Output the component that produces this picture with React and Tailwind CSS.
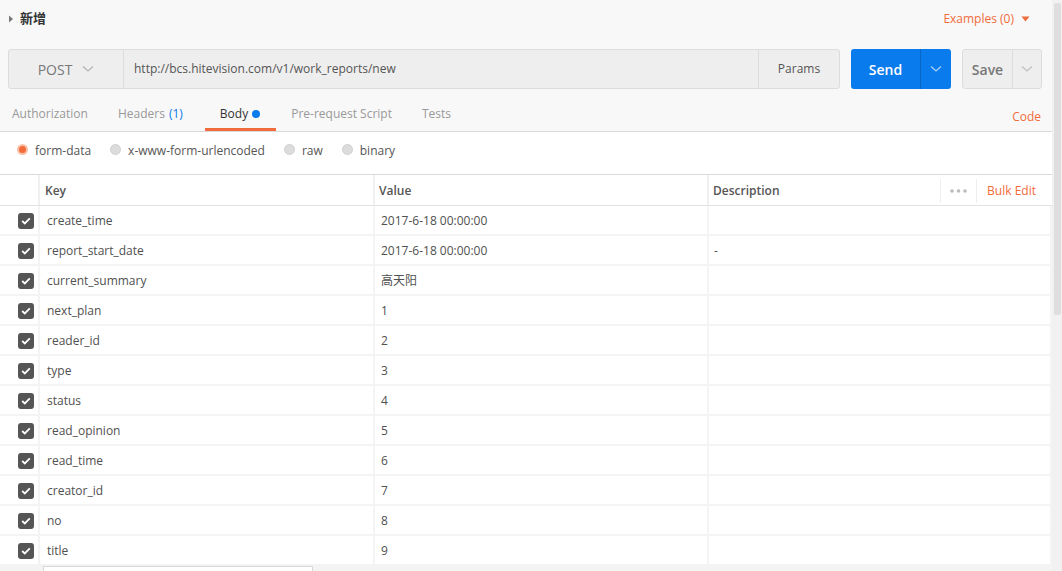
import React from 'react';

const rows = [
  ['create_time', '2017-6-18 00:00:00', ''],
  ['report_start_date', '2017-6-18 00:00:00', '-'],
  ['current_summary', '高天阳', ''],
  ['next_plan', '1', ''],
  ['reader_id', '2', ''],
  ['type', '3', ''],
  ['status', '4', ''],
  ['read_opinion', '5', ''],
  ['read_time', '6', ''],
  ['creator_id', '7', ''],
  ['no', '8', ''],
  ['title', '9', ''],
];

const Chevron = ({ className }) => (
  <svg width="12" height="8" viewBox="0 0 12 8" className={className}>
    <path d="M1 1.5 L6 6 L11 1.5" fill="none" stroke="currentColor" strokeWidth="1.3" />
  </svg>
);

const Check = () => (
  <div className="w-[16px] h-[16px] rounded-[3px] bg-[#555] flex items-center justify-center">
    <svg width="10" height="8" viewBox="0 0 10 8">
      <path d="M1.2 4 L3.8 6.4 L8.8 1.4" fill="none" stroke="#fff" strokeWidth="1.8" />
    </svg>
  </div>
);

const Radio = ({ on, label }) => (
  <div className="flex items-center mr-[19px]">
    {on ? (
      <span className="w-[11px] h-[11px] rounded-full bg-[#f26b3a] border-[2px] border-[#f9c2a8] mr-[7px] -mt-[4px]" />
    ) : (
      <span className="w-[11px] h-[11px] rounded-full bg-[#dcdcdc] border border-[#d0d0d0] mr-[7px] -mt-[4px]" />
    )}
    <span>{label}</span>
  </div>
);

const cols = 'grid grid-cols-[38px_333px_332px_1fr] gap-x-[2px]';

export default function App() {
  return (
    <div
      className="w-[1062px] h-[571px] overflow-hidden flex text-[12px] text-[#505050]"
      style={{ fontFamily: '"Open Sans", "Noto Sans CJK SC", sans-serif' }}
    >
      <div className="w-[1052px] bg-[#f8f8f8] flex flex-col">
        {/* title row */}
        <div className="h-[38px] shrink-0 flex items-center px-[8px]">
          <svg width="6" height="8" viewBox="0 0 6 8" className="mr-[6px]">
            <path d="M1 0.5 L5 4 L1 7.5 Z" fill="#777" />
          </svg>
          <span className="text-[13px] font-semibold text-[#333]">新增</span>
          <div className="ml-auto flex items-center text-[#f26b3a] text-[12px] mr-[14px]">
            Examples (0)
            <svg width="9" height="6" viewBox="0 0 9 6" className="ml-[7px]">
              <path d="M0.5 0.5 L8.5 0.5 L4.5 5.5 Z" fill="#f26b3a" />
            </svg>
          </div>
        </div>

        {/* request bar */}
        <div className="mt-[11px] h-[40px] shrink-0 flex px-[8px]">
          <div className="w-[832px] flex border border-[#dcdcdc] rounded-[3px] bg-[#eeeeee]">
            <div className="w-[115px] flex items-center justify-center text-[14px] text-[#777] border-r border-[#dcdcdc]">
              <span className="mr-[10px]">POST</span>
              <Chevron className="text-[#b5b5b5]" />
            </div>
            <div className="flex-1 flex items-center pl-[10px] text-[#555]">
              http://bcs.hitevision.com/v1/work_reports/new
            </div>
            <div className="w-[81px] flex items-center justify-center border-l border-[#dcdcdc] text-[#555]">
              Params
            </div>
          </div>
          <div className="ml-[11px] w-[100px] flex rounded-[3px] bg-[#097bed] text-white">
            <div className="w-[69px] flex items-center justify-center text-[14px] font-semibold">Send</div>
            <div className="flex-1 flex items-center justify-center border-l border-[#0a66c4]">
              <Chevron className="text-[#a9cff7]" />
            </div>
          </div>
          <div className="ml-[11px] w-[80px] flex rounded-[3px] border border-[#dcdcdc] bg-[#eeeeee]">
            <div className="w-[49px] flex items-center justify-center text-[14px] font-semibold text-[#777]">Save</div>
            <div className="flex-1 flex items-center justify-center border-l border-[#dcdcdc]">
              <Chevron className="text-[#c0c0c0]" />
            </div>
          </div>
        </div>

        {/* tabs */}
        <div className="mt-[11px] h-[32px] shrink-0 flex border-b border-[#dadada] text-[#999]">
          <div className="pl-[12px] pr-[30px] pb-[4px] flex items-center">Authorization</div>
          <div className="pr-[22px] pb-[4px] flex items-center">
            Headers <span className="text-[#097bed] ml-[4px]">(1)</span>
          </div>
          <div className="pl-[15px] pr-[16px] flex items-center text-[#333] border-b-[3px] border-[#f26b3a] pb-[1px]">
            Body
            <span className="w-[8px] h-[8px] rounded-full bg-[#097bed] ml-[4px]" />
          </div>
          <div className="px-[15px] pb-[4px] flex items-center">Pre-request Script</div>
          <div className="px-[15px] pb-[4px] flex items-center">Tests</div>
          <div className="ml-auto pr-[11px] flex items-center text-[#f26b3a] pt-[2px]">Code</div>
        </div>

        {/* body type radios */}
        <div className="h-[43px] shrink-0 bg-white flex items-center pl-[17px] pb-[4px] text-[#555] border-b border-[#dadada]">
          <Radio on label="form-data" />
          <Radio label="x-www-form-urlencoded" />
          <Radio label="raw" />
          <Radio label="binary" />
        </div>

        {/* table */}
        <div className="flex-1 min-h-0 bg-[#f4f4f4] flex flex-col">
          <div className={`h-[31px] shrink-0 ${cols} bg-[#f0f0f0] border-b border-[#e2e2e2] font-semibold text-[#555]`}>
            <div className="bg-white" />
            <div className="bg-white flex items-center pl-[5px] pt-[1px]">Key</div>
            <div className="bg-white flex items-center pl-[4px] pt-[1px]">Value</div>
            <div className="bg-white flex items-center pl-[4px] pt-[1px]">
              Description
              <div className="ml-auto h-full flex items-center">
                <div className="h-[24px] border-l border-[#eee] flex items-center px-[9px]">
                  <svg width="17" height="4" viewBox="0 0 17 4">
                    <circle cx="2" cy="2" r="1.8" fill="#bbb" />
                    <circle cx="8.5" cy="2" r="1.8" fill="#bbb" />
                    <circle cx="15" cy="2" r="1.8" fill="#bbb" />
                  </svg>
                </div>
                <div className="h-[24px] border-l border-[#eee] flex items-center pl-[10px] pr-[16px] font-normal text-[#f26b3a]">
                  Bulk Edit
                </div>
              </div>
            </div>
          </div>
          {rows.map(([k, v, d]) => (
            <div
              key={k}
              className={`h-[30px] shrink-0 ${cols} border-b-2 border-[#f4f4f4] bg-[#f4f4f4]`}
            >
              <div className="bg-white flex items-center justify-end pr-[4px] pt-[2px]">
                <Check />
              </div>
              <div className="bg-white flex items-center pl-[7px] pt-[2px]">{k}</div>
              <div className="bg-white flex items-center pl-[6px] pt-[2px]">{v}</div>
              <div className="bg-white flex items-center pl-[5px] pt-[2px] mr-[2px]">{d}</div>
            </div>
          ))}
          <div className="h-[6px] shrink-0 pl-[43px]">
            <div className="w-[270px] h-full border border-[#d8d8d8] bg-white" />
          </div>
        </div>
      </div>
      <div className="w-[10px] bg-[#f1f1f1] flex justify-center pt-[3px]">
        <div className="w-[7px] h-[312px] bg-[#dedede] rounded-[2px]" />
      </div>
    </div>
  );
}
